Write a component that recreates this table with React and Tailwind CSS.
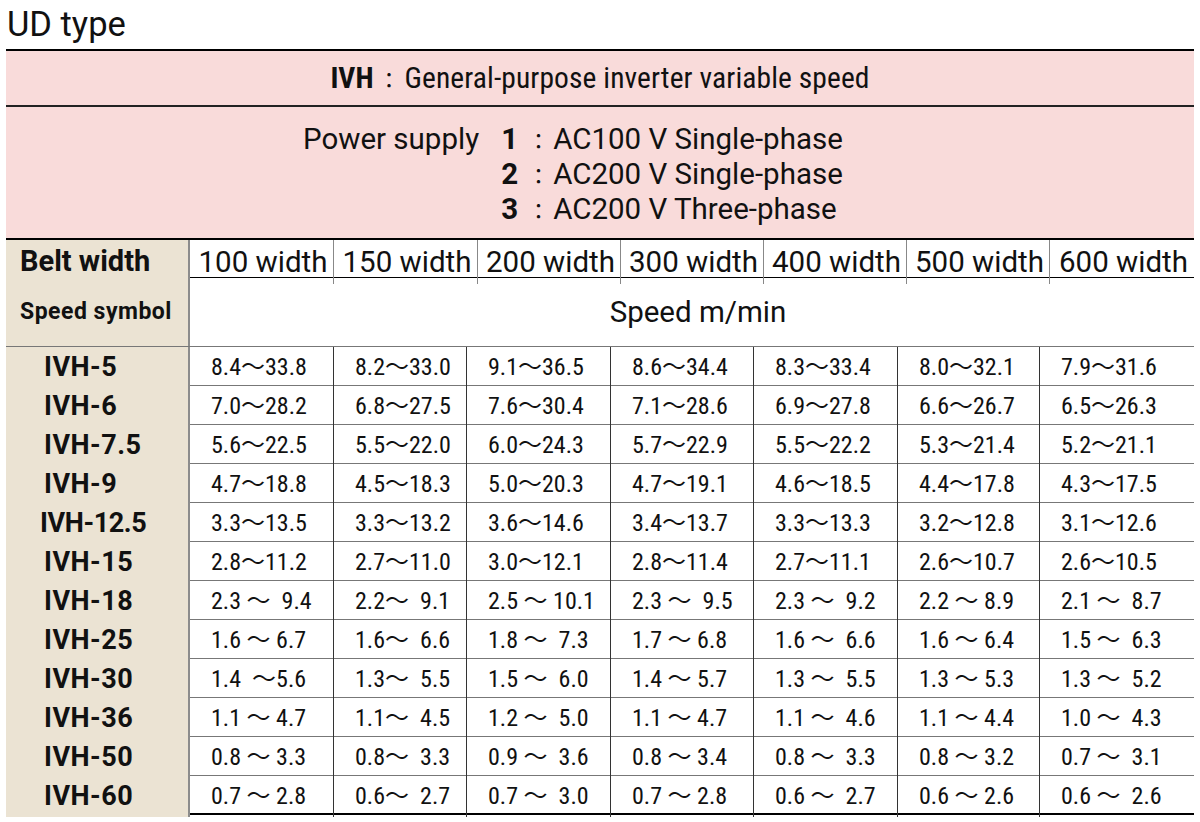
import React from "react";

const rows = [
  ["IVH-5", "8.4～33.8", "8.2～33.0", "9.1～36.5", "8.6～34.4", "8.3～33.4", "8.0～32.1", "7.9～31.6"],
  ["IVH-6", "7.0～28.2", "6.8～27.5", "7.6～30.4", "7.1～28.6", "6.9～27.8", "6.6～26.7", "6.5～26.3"],
  ["IVH-7.5", "5.6～22.5", "5.5～22.0", "6.0～24.3", "5.7～22.9", "5.5～22.2", "5.3～21.4", "5.2～21.1"],
  ["IVH-9", "4.7～18.8", "4.5～18.3", "5.0～20.3", "4.7～19.1", "4.6～18.5", "4.4～17.8", "4.3～17.5"],
  ["IVH-12.5", "3.3～13.5", "3.3～13.2", "3.6～14.6", "3.4～13.7", "3.3～13.3", "3.2～12.8", "3.1～12.6"],
  ["IVH-15", "2.8～11.2", "2.7～11.0", "3.0～12.1", "2.8～11.4", "2.7～11.1", "2.6～10.7", "2.6～10.5"],
  ["IVH-18", "2.3 ～  9.4", "2.2～  9.1", "2.5 ～ 10.1", "2.3 ～  9.5", "2.3 ～  9.2", "2.2 ～ 8.9", "2.1 ～  8.7"],
  ["IVH-25", "1.6 ～ 6.7", "1.6～  6.6", "1.8 ～  7.3", "1.7 ～ 6.8", "1.6 ～  6.6", "1.6 ～ 6.4", "1.5 ～  6.3"],
  ["IVH-30", "1.4  ～5.6", "1.3～  5.5", "1.5 ～  6.0", "1.4 ～ 5.7", "1.3 ～  5.5", "1.3 ～ 5.3", "1.3 ～  5.2"],
  ["IVH-36", "1.1 ～ 4.7", "1.1～  4.5", "1.2 ～  5.0", "1.1 ～ 4.7", "1.1 ～  4.6", "1.1 ～ 4.4", "1.0 ～  4.3"],
  ["IVH-50", "0.8 ～ 3.3", "0.8～  3.3", "0.9 ～  3.6", "0.8 ～ 3.4", "0.8 ～  3.3", "0.8 ～ 3.2", "0.7 ～  3.1"],
  ["IVH-60", "0.7 ～ 2.8", "0.6～  2.7", "0.7 ～  3.0", "0.7 ～ 2.8", "0.6 ～  2.7", "0.6 ～ 2.6", "0.6 ～  2.6"],
];

const widths = ["100", "150", "200", "300", "400", "500", "600"];

const App = () => {
  return (
    <div className="w-[1200px] h-[822px] bg-white text-[#111] font-['Roboto',sans-serif] overflow-hidden">
      <div className="h-[49px] pl-[7px] pt-[7px] text-[34.5px] leading-none">UD type</div>
      <div className="mx-[6px]">
        {/* pink header */}
        <div className="bg-[#f9dbda] border-t-2 border-black">
          <div className="h-[56px] flex items-center justify-center border-b-2 border-[#222] text-[29.5px] font-['Roboto_Condensed','Liberation_Sans_Narrow','Roboto',sans-serif]">
            <span className="font-bold">IVH</span>
            <span className="w-[31px] text-center text-[22px] font-['Noto_Sans_CJK_JP']">：</span>
            <span className="tracking-[0.1px]">General-purpose inverter variable speed</span>
          </div>
          <div className="h-[131px] flex items-center pl-[297px] text-[29.5px] leading-[35px]">
            <div className="flex items-start pt-[4px]">
              <div className="pr-[22px]">Power supply</div>
              <div className="flex flex-col">
                {["AC100 V Single-phase", "AC200 V Single-phase", "AC200 V Three-phase"].map((t, i) => (
                  <div key={t} className="flex">
                    <span className="font-bold w-[23px]">{i + 1}</span>
                    <span className="w-[29px] text-center text-[22px] font-['Noto_Sans_CJK_JP']">：</span>
                    <span>{t}</span>
                  </div>
                ))}
              </div>
            </div>
          </div>
        </div>

        {/* belt width row */}
        <div className="grid grid-cols-[184px_144px_144px_143px_143px_143px_143px_144px] h-[40px] border-t-2 border-black border-b border-[#777]">
          <div className="bg-[#ebe3d3] border-r-2 border-[#8c8c8c] pl-[14px] flex items-center text-[29px] font-bold">Belt width</div>
          {widths.map((w, i) => (
            <div key={w} className={`flex items-center justify-center pl-[3px] text-[29.5px] whitespace-nowrap ${i < 6 ? "border-r border-[#888]" : ""}`}>
              {w} width
            </div>
          ))}
        </div>

        {/* speed symbol row */}
        <div className="grid grid-cols-[184px_1fr] h-[69px] border-b border-[#777]">
          <div className="bg-[#ebe3d3] border-r-2 border-[#8c8c8c] pl-[14px] flex items-center text-[23px] font-bold tracking-[0.5px]">Speed symbol</div>
          <div className="flex items-center justify-center text-[29.5px] pl-[12px]">Speed m/min</div>
        </div>

        {/* data */}
        {rows.map((r, ri) => (
          <div
            key={r[0]}
            className={`grid grid-cols-[184px_144px_133px_144px_143px_144px_142px_154px] h-[39px] ${ri === rows.length - 1 ? "border-b-2 border-black" : "border-b border-[#777]"}`}
          >
            <div
              className={`bg-[#ebe3d3] border-r-2 border-[#8c8c8c] flex items-center text-[27px] font-bold ${r[0] === "IVH-12.5" ? "pl-[34px] tracking-[-0.4px]" : "pl-[38px] tracking-[0.5px]"}`}
            >
              {r[0]}
            </div>
            {r.slice(1).map((v, i) => (
              <div
                key={i}
                className={`flex items-center pl-[21px] whitespace-pre text-[24px] font-['Liberation_Sans_Narrow','Roboto_Condensed','Noto_Sans_CJK_JP',sans-serif] ${i < 6 ? "border-r border-[#333]" : ""}`}
              >
                {v}
              </div>
            ))}
          </div>
        ))}
      </div>
    </div>
  );
};

export default App;
